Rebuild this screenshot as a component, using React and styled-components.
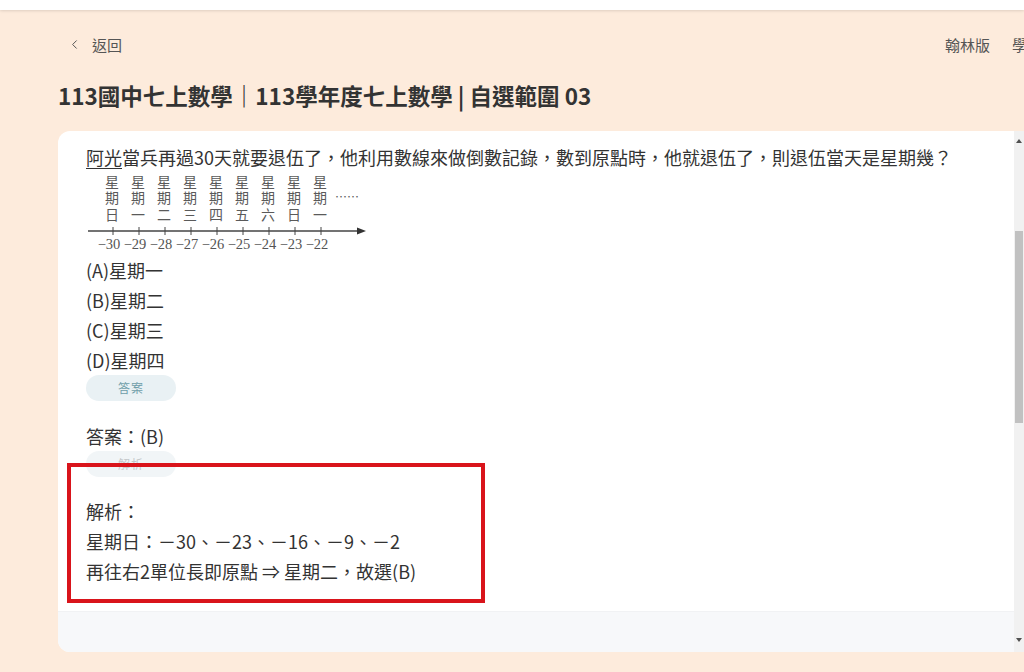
import styled, { createGlobalStyle } from "styled-components";
import { ChevronLeft } from "lucide-react";

const GlobalStyle = createGlobalStyle`
  html, body {
    margin: 0;
    padding: 0;
    overflow: hidden;
    background: #fdebdc;
  }
  body {
    font-family: "Noto Sans CJK TC", "Noto Sans", sans-serif;
    color: #333;
  }
`;

const Page = styled.div`
  width: 1024px;
  height: 672px;
  display: flex;
  flex-direction: column;
`;

const TopBar = styled.div`
  height: 10px;
  background: #fff;
  box-shadow: 0 1px 3px rgba(0, 0, 0, 0.12);
  flex-shrink: 0;
`;

const TopRow = styled.div`
  width: 1057px;
  box-sizing: border-box;
  padding: 0 0 0 67px;
  margin-top: 23px;
  height: 22px;
  display: flex;
  align-items: center;
  justify-content: space-between;
  font-size: 15px;
  color: #555;
`;

const Back = styled.div`
  display: flex;
  align-items: center;
  gap: 10px;
`;

const Nav = styled.div`
  display: flex;
  gap: 22px;
  white-space: nowrap;
`;

const Title = styled.h1`
  margin: 26px 0 0 58px;
  font-size: 22.5px;
  line-height: 28px;
  font-weight: 700;
  color: #333;
  white-space: nowrap;
`;

const Card = styled.div`
  margin: 22px 0 0 58px;
  height: 521px;
  display: flex;
  border-radius: 12px 0 0 12px;
  overflow: hidden;
  background: #fff;
`;

const Scroll = styled.div`
  flex: 1;
  display: flex;
  flex-direction: column;
`;

const Body = styled.div`
  position: relative;
  flex: 1;
  padding: 11px 28px 0 28px;
  font-size: 18px;
  line-height: 30px;
  color: #333;
`;

const Footer = styled.div`
  height: 40px;
  background: #f7f8fa;
  border-top: 1px solid #f1f2f4;
`;

const Name = styled.span`
  text-decoration: underline;
  text-underline-offset: 3px;
  text-decoration-thickness: 1px;
`;

const Line = styled.div`
  white-space: nowrap;
`;

const Figure = styled.svg`
  display: block;
  margin: 0 0 0 1px;
`;

const Pill = styled.div`
  width: 90px;
  height: 26px;
  border-radius: 13px;
  background: ${(p) => (p.$faded ? "#f1f5f7" : "#e9f1f4")};
  color: ${(p) => (p.$faded ? "#c4c8ca" : "#6f9ea9")};
  font-size: 12px;
  line-height: 26px;
  text-align: center;
  letter-spacing: 1px;
  margin-bottom: ${(p) => p.$mb || 0}px;
`;

const Highlight = styled.div`
  position: absolute;
  left: 9px;
  top: 332px;
  width: 410px;
  height: 132px;
  border: 4.5px solid #d9141b;
`;

const Track = styled.div`
  width: 10px;
  background: #f1f1f1;
  display: flex;
  flex-direction: column;
  align-items: center;
`;

const Arrow = styled.div`
  width: 0;
  height: 0;
  margin: ${(p) => (p.$down ? "auto 0 10px" : "8px 0 0")};
  border-left: 3.5px solid transparent;
  border-right: 3.5px solid transparent;
  ${(p) =>
    p.$down ? "border-top: 4px solid #505050;" : "border-bottom: 4px solid #505050;"}
`;

const Thumb = styled.div`
  width: 8px;
  height: 192px;
  margin-top: 88px;
  background: #c1c1c1;
`;

const days = ["日", "一", "二", "三", "四", "五", "六", "日", "一"];
const nums = [-30, -29, -28, -27, -26, -25, -24, -23, -22];

function NumberLine() {
  return (
    <Figure width="282" height="83" viewBox="0 0 282 83">
      <g
        fill="#5a5a5a"
        fontFamily="'Noto Sans CJK TC', sans-serif"
        fontSize="14"
        textAnchor="middle"
      >
        {days.map((d, i) => (
          <g key={i}>
            <text x={25 + i * 26} y={15}>星</text>
            <text x={25 + i * 26} y={31}>期</text>
            <text x={25 + i * 26} y={48}>{d}</text>
          </g>
        ))}
        <text x={260} y={30} textAnchor="middle" fontSize="12">……</text>
      </g>
      <line x1="1" y1="59" x2="272" y2="59" stroke="#444" strokeWidth="1.3" />
      <path d="M270 55.5 L279 59 L270 62.5 Z" fill="#333" />
      {nums.map((n, i) => (
        <line
          key={n}
          x1={26 + i * 26}
          y1="55"
          x2={26 + i * 26}
          y2="63"
          stroke="#444"
          strokeWidth="1"
        />
      ))}
      <g
        fill="#555"
        fontFamily="'Liberation Serif', serif"
        fontSize="14.5"
        textAnchor="middle"
      >
        {nums.map((n, i) => (
          <text key={n} x={22 + i * 26} y={77}>
            {"−" + Math.abs(n)}
          </text>
        ))}
      </g>
    </Figure>
  );
}

export default function App() {
  return (
    <Page>
      <GlobalStyle />
      <TopBar />
      <TopRow>
        <Back>
          <ChevronLeft size={15} strokeWidth={1.6} />
          <span>返回</span>
        </Back>
        <Nav>
          <span>翰林版</span>
          <span>學年度</span>
        </Nav>
      </TopRow>
      <Title>113國中七上數學｜113學年度七上數學 | 自選範圍 03</Title>
      <Card>
        <Scroll>
          <Body>
            <Line>
              <Name>阿光</Name>
              當兵再過30天就要退伍了，他利用數線來做倒數記錄，數到原點時，他就退伍了，則退伍當天是星期幾？
            </Line>
            <NumberLine />
            <Line>(A)星期一</Line>
            <Line>(B)星期二</Line>
            <Line>(C)星期三</Line>
            <Line>(D)星期四</Line>
            <Pill $mb={20}>答案</Pill>
            <Line>答案：(B)</Line>
            <Pill $faded $mb={19}>解析</Pill>
            <Line>解析：</Line>
            <Line>星期日：－30、－23、－16、－9、－2</Line>
            <Line>再往右2單位長即原點 ⇒ 星期二，故選(B)</Line>
            <Highlight />
          </Body>
          <Footer />
        </Scroll>
        <Track>
          <Arrow />
          <Thumb />
          <Arrow $down />
        </Track>
      </Card>
    </Page>
  );
}
